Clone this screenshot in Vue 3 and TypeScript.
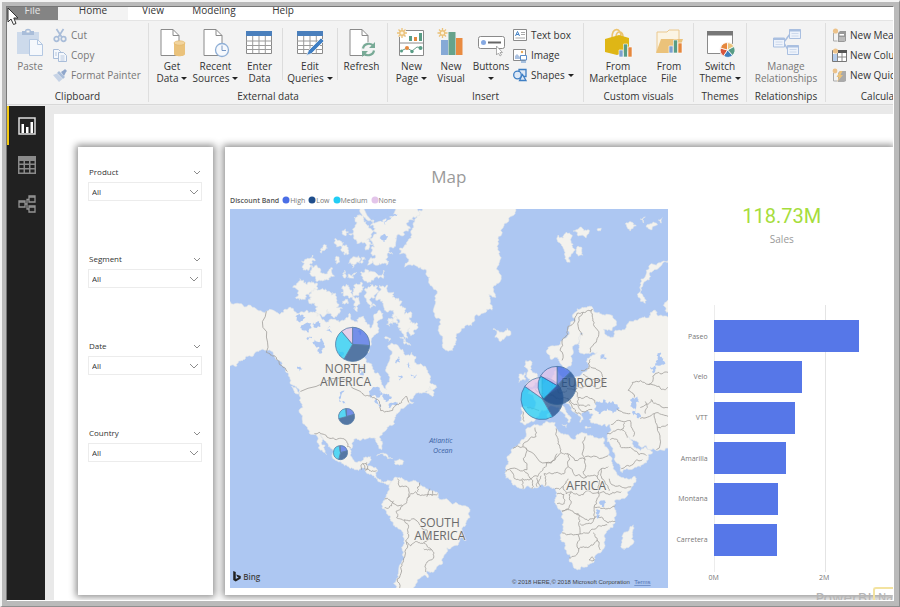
<script setup lang="ts">
import { ref } from 'vue'

type Point = [number, number]

interface RibbonItem {
  icon?: string
  lines?: string[]
  arrow?: boolean
  muted?: boolean
  divider?: boolean
}
interface SmallItem {
  icon: string
  label: string
  arrow?: boolean
  muted?: boolean
}
interface RibbonGroup {
  id: string
  title: string
  large: RibbonItem[]
  small: SmallItem[]
}

const sheet = '<path d="M3 1.500h12l6 6v20H3z" fill="#fff" stroke="#8a8a8a"/><path d="M15 1.500v6h6" fill="none" stroke="#8a8a8a"/>'
const spark = (x: number, y: number, r: number) =>
  `<g stroke="#ebc27a" stroke-width="1.300" transform="translate(${x} ${y})"><path d="M0 ${-r}V${r}M${-r} 0H${r}M${-r * 0.7} ${-r * 0.7}L${r * 0.7} ${r * 0.7}M${-r * 0.7} ${r * 0.7}L${r * 0.7} ${-r * 0.7}"/><circle r="${r * 0.45}" fill="#fbf3df"/></g>`
const miniBars = (x: number, y: number) =>
  `<g transform="translate(${x} ${y})" stroke="#fff" stroke-width=".6"><path d="M0 6h4v7H0z" fill="#7da0cf"/><path d="M4.500 0h4v13h-4z" fill="#589c85"/><path d="M9 3h4v10H9z" fill="#e5873d"/></g>`
const node = (x: number, y: number) =>
  `<path d="M${x} ${y}h11v9h-11z" fill="#eef3fb" stroke="#a9bfe0"/><path d="M${x} ${y + 1}h11" stroke="#a9bfe0" stroke-width="2"/><path d="M${x + 2} ${y + 4}h7M${x + 2} ${y + 6.5}h7" stroke="#c5d3ea" stroke-width=".8"/>`

const icons: Record<string, string> = {
  paste: '<path d="M1 4h22v22H1z" fill="#cddaeb"/><path d="M6 3h3c0-3 6-3 6 0h3v4H6z" fill="#a9bdd9"/><path d="M10.500 2.500h3v2h-3z" fill="#f3f3f3"/><path d="M13.500 11.500h8l5 5v11h-13z" fill="#f5f8fc" stroke="#b4c8e2"/><path d="M21.500 11.500v5h5" fill="none" stroke="#b4c8e2"/>',
  getData: sheet + '<path d="M16 15v11c0 3 11 3 11 0V15" fill="#eac27b"/><ellipse cx="21.500" cy="15" rx="5.500" ry="2.200" fill="#f1d49e" stroke="#e2b462" stroke-width=".6"/>',
  recent: sheet + '<circle cx="21" cy="22" r="6.500" fill="#f6f9fd" stroke="#8fafd6" stroke-width="1.300"/><path d="M21 17.500V22.500h4" fill="none" stroke="#7898c4"/>',
  enter: '<path d="M1.500 3.500h25v22h-25z" fill="#fff" stroke="#8a8a8a"/><path d="M1 3h26v5H1z" fill="#4a7fbc"/><path d="M1 13h26M1 17.500h26M1 21.500h26M7.700 8v17M14 8v17M20.300 8v17" stroke="#9b9b9b"/>',
  edit: '<path d="M1.500 3.500h25v22h-25z" fill="#fff" stroke="#8a8a8a"/><path d="M1 3h26v5H1z" fill="#4a7fbc"/><path d="M1 13h26M1 17.500h26M1 21.500h26M7.700 8v17M14 8v17M20.300 8v17" stroke="#9b9b9b"/><path d="M25 10l3 3-12.500 12.500-5 2 2-5z" fill="#3f7fc4" stroke="#f3f3f3" stroke-width=".8"/>',
  refresh: sheet + '<circle cx="21.500" cy="21.500" r="7.500" fill="#f3f3f3"/><path d="M16 20.500c1-5.500 8-6 10.500-2.500M27 22.500c-1 5.500-8 6-10.500 2.500" fill="none" stroke="#78aa96" stroke-width="2.200"/><path d="M28 14v6h-6zM15 29v-6h6z" fill="#78aa96"/>',
  newPage: '<path d="M2.500 2.500h24v25h-24z" fill="#fff" stroke="#8a8a8a"/><path d="M2 15h25" stroke="#8a8a8a"/><path d="M12 8h3v5h-3zM22 5h3v8h-3z" fill="#589c85"/><path d="M17 9h3v4h-3z" fill="#e5873d"/><path d="M4 23l6-3 5 3 5-4 5 1" fill="none" stroke="#6a9d8b"/><g fill="#589c85"><circle cx="4.500" cy="23" r="1.500"/><circle cx="15" cy="23.500" r="1.700"/><circle cx="23.500" cy="20" r="2"/></g><circle cx="10" cy="20" r="2" fill="#e5873d"/><path d="M0 0h9v9H0z" fill="#f3f3f3"/>' + spark(5, 5, 5),
  newVisual: '<path d="M4 12h7v15H4z" fill="#86a9d6"/><path d="M11.500 4h7v23h-7z" fill="#66a38c"/><path d="M19 10h6.500v17H19z" fill="#e98b41"/>' + spark(5.5, 5, 5),
  buttons: '<rect x="1.500" y="8.500" width="26" height="12" rx="2" fill="#fff" stroke="#8a8a8a"/><circle cx="6.500" cy="14.500" r="2.500" fill="#86a9e2"/><path d="M11 14.500h13" stroke="#666" stroke-width="2"/><path d="M19.500 18v9l2-2 1.500 3 1.500-1-1.500-2.500h2.500z" fill="#fff" stroke="#999" stroke-width=".8"/>',
  market: '<path d="M8 10c0-11 9-11 9-1M12 8c1-6 7-5 7 1" fill="none" stroke="#ecc46f" stroke-width="1.600"/><path d="M1 11l14-4 10 3v13l-12 4-12-3z" fill="#dfb615"/>' + miniBars(15, 16),
  folder: '<path d="M2 9V4h10l2-2h10v22H2z" fill="#fbf4e4" stroke="#ebc88e"/><path d="M1 25l5-14h22l-5 14z" fill="#ebc27a"/>' + miniBars(14, 12),
  theme: '<path d="M1.500 3.500h25v22h-25z" fill="#fff" stroke="#8a8a8a"/><path d="M1 3h26v4.500H1z" fill="#777"/><circle cx="21.500" cy="22" r="8" fill="#f3f3f3"/><g stroke="#fff" stroke-width=".8"><path d="M21.500 22v-7.500a7.500 7.500 0 0 1 6.500 4z" fill="#eac27b"/><path d="M21.500 22l6.500-3.500a7.500 7.500 0 0 1-1.500 9z" fill="#589c85"/><path d="M21.500 22l5 5.500a7.500 7.500 0 0 1-9 .5z" fill="#3f7fbd"/><path d="M21.500 22l-4 6a7.500 7.500 0 0 1-3-8z" fill="#d9553c"/><path d="M21.500 22l-7-2a7.500 7.500 0 0 1 7-5.500z" fill="#e5873d"/></g>',
  relations: '<path d="M12 14l6-8M12 15l4 7" stroke="#a9bfe0" stroke-width="1.500"/>' + node(1.5, 10) + node(17.5, 1.5) + node(15.500, 17.500),
  cut: '<g fill="none" stroke="#a9bdd9" stroke-width="1.700"><circle cx="3.500" cy="11" r="2.300"/><circle cx="10.500" cy="11" r="2.300"/><path d="M5 9.500L10.500 1M9 9.500L3.500 1"/></g>',
  copy: '<g fill="#f5f8fc" stroke="#a9bdd9"><path d="M.500 1.500h5l2 2v7h-7z"/><path d="M5.500 4.500h5l3 3v6h-8z"/></g><path d="M2 5h2M2 7h2M7.500 8h4M7.500 10h4M7.500 12h4" stroke="#a9bdd9" stroke-width=".8"/>',
  painter: '<path d="M8 4l3-2 1-1 2 2-1 1-2 4z" fill="#8fa6cb"/><path d="M6 3l6 6-2 2-6-6z" fill="#a9bdd9"/><path d="M4 5.500l5.500 5.500L6 14 0 7z" fill="#c6d3e6"/>',
  textBox: '<path d="M.500 1.500h13v11H.500z" fill="#fff" stroke="#8a8a8a"/><path d="M2.500 8l2-4.500L6.500 8M3.200 6.500h2.600" fill="none" stroke="#3f7fc4"/><path d="M8 4.500h4M8 6.500h4M2.500 10h9.500" stroke="#aaa"/>',
  image: '<path d="M.500 1.500h12v11H.500z" fill="#fff" stroke="#8a8a8a"/><circle cx="9" cy="4" r="1.200" fill="#e9a95a"/><path d="M2 8l2-2 3 3v2H2z" fill="#a9c0e0"/><path d="M7.500 7.500h6v4.500h-6z" fill="#fff" stroke="#5c8fcb"/><path d="M8 14h5" stroke="#5c8fcb"/>',
  shapes: '<g fill="#dde8f6" stroke="#3f7fc4" stroke-width="1.300"><path d="M6 1.500h7v7H6z"/><circle cx="4.500" cy="7" r="3.800"/><path d="M9.500 6.500l3.500 6H6.500z"/></g>',
  measure: '<path d="M1.500 5v8h4" fill="none" stroke="#aaa"/><path d="M6 5l2-2h6v10l-2 1H6z" fill="#999"/><path d="M7.500 6h4.500v1.500H7.500z" fill="#fff"/><path d="M8 9v4M10 9v4M12 9v4" stroke="#eee" stroke-width=".8"/><circle cx="3.500" cy="3" r="2.600" fill="#ecc28a"/>',
  column: '<path d="M.500 2.500h14v11H.500z" fill="#fff" stroke="#777"/><path d="M6 2h9v3H6z" fill="#555"/><path d="M1 6h4v7H1z" fill="#b5cdec"/><path d="M5.500 5v8M10 5v8M5 9h9" stroke="#888"/><circle cx="3.500" cy="3" r="2.600" fill="#ecc28a"/>',
  quick: '<path d="M1.500 5v8h4" fill="none" stroke="#aaa"/><path d="M6 5l2-2h6v10l-2 1H6z" fill="#aaa"/><path d="M8 3L4.500 9H7l-2 5 6-7H8.500l2-4z" fill="#ebc27a"/><circle cx="3" cy="3" r="2.400" fill="#ecc28a"/>',
}

const tabs = ['File', 'Home', 'View', 'Modeling', 'Help']

const groups: RibbonGroup[] = [
  {
    id: 'clipboard',
    title: 'Clipboard',
    large: [{ icon: 'paste', lines: ['Paste'], muted: true }],
    small: [
      { icon: 'cut', label: 'Cut', muted: true },
      { icon: 'copy', label: 'Copy', muted: true },
      { icon: 'painter', label: 'Format Painter', muted: true },
    ],
  },
  {
    id: 'external',
    title: 'External data',
    large: [
      { icon: 'getData', lines: ['Get', 'Data'], arrow: true },
      { icon: 'recent', lines: ['Recent', 'Sources'], arrow: true },
      { icon: 'enter', lines: ['Enter', 'Data'] },
      { divider: true },
      { icon: 'edit', lines: ['Edit', 'Queries'], arrow: true },
      { divider: true },
      { icon: 'refresh', lines: ['Refresh'] },
    ],
    small: [],
  },
  {
    id: 'insert',
    title: 'Insert',
    large: [
      { icon: 'newPage', lines: ['New', 'Page'], arrow: true },
      { icon: 'newVisual', lines: ['New', 'Visual'] },
      { icon: 'buttons', lines: ['Buttons', ''], arrow: true },
    ],
    small: [
      { icon: 'textBox', label: 'Text box' },
      { icon: 'image', label: 'Image' },
      { icon: 'shapes', label: 'Shapes', arrow: true },
    ],
  },
  {
    id: 'custom',
    title: 'Custom visuals',
    large: [
      { icon: 'market', lines: ['From', 'Marketplace'] },
      { icon: 'folder', lines: ['From', 'File'] },
    ],
    small: [],
  },
  { id: 'themes', title: 'Themes', large: [{ icon: 'theme', lines: ['Switch', 'Theme'], arrow: true }], small: [] },
  {
    id: 'relationships',
    title: 'Relationships',
    large: [{ icon: 'relations', lines: ['Manage', 'Relationships'], muted: true }],
    small: [],
  },
  {
    id: 'calculations',
    title: 'Calculations',
    large: [],
    small: [
      { icon: 'measure', label: 'New Measure' },
      { icon: 'column', label: 'New Column' },
      { icon: 'quick', label: 'New Quick Measure' },
    ],
  },
]

const slicers = ref([
  { name: 'Product', value: 'All' },
  { name: 'Segment', value: 'All' },
  { name: 'Date', value: 'All' },
  { name: 'Country', value: 'All' },
])

const bands = [
  { name: 'High', color: '#4a6ee6' },
  { name: 'Low', color: '#1f4e8c' },
  { name: 'Medium', color: '#22cdf5' },
  { name: 'None', color: '#e3c5ea' },
]

const axisMax = 3
const products = [
  { name: 'Paseo', sales: 2.6 },
  { name: 'Velo', sales: 1.58 },
  { name: 'VTT', sales: 1.46 },
  { name: 'Amarilla', sales: 1.3 },
  { name: 'Montana', sales: 1.16 },
  { name: 'Carretera', sales: 1.13 },
]

/* Coastlines: coarse outlines get repeatable midpoint noise so that they read as shores. */
function parse(text: string): Point[] {
  return text.split(' ').map((pair) => pair.split(',').map(Number) as Point)
}
function noise(x: number, y: number): number {
  const s = Math.sin(x * 12.9898 + y * 78.233) * 43758.5453
  return (s - Math.floor(s)) * 2 - 1
}
function roughen(points: Point[], closed: boolean, amount: number, passes: number): Point[] {
  let current = points
  for (let pass = 0; pass < passes; pass++) {
    const next: Point[] = []
    const count = current.length
    for (let i = 0; i < count; i++) {
      const a = current[i]
      next.push(a)
      if (!closed && i === count - 1) break
      const b = current[(i + 1) % count]
      const length = Math.hypot(b[0] - a[0], b[1] - a[1])
      if (length < 1.6) continue
      const shift = noise(a[0] + b[0], a[1] + b[1]) * amount
      next.push([(a[0] + b[0]) / 2 - (b[1] - a[1]) * shift, (a[1] + b[1]) / 2 + (b[0] - a[0]) * shift])
    }
    current = next
  }
  return current
}
function trace(text: string, closed: boolean, amount: number): string {
  const points = roughen(parse(text), closed, amount, 3)
  return 'M' + points.map((p) => `${p[0].toFixed(1)} ${p[1].toFixed(1)}`).join('L') + (closed ? 'Z' : '')
}

const arctic = [
  // Ellesmere and Devon
  '363,206 424,206 417,216 409,222 405,231 397,237 396,243 391,247 393,254 386,259 387,265 378,265 368,265 369,261 376,257 372,252 375,247 371,240 377,234 371,226 374,220 366,218',
  '355,217 361,215 364,221 369,228 372,236 367,240 370,247 366,250 360,243 354,238 353,229 357,224',
  // Banks and Victoria
  '299,282 304,280 308,284 314,282 318,287 311,292 306,299 300,300 298,293',
  '312,297 318,290 326,289 332,295 336,293 337,301 343,308 340,313 333,316 328,309 322,315 316,312 318,306 312,304',
  // Baffin
  '366,288 371,284 378,286 376,294 372,302 376,306 371,308 367,300',
  '380,285 388,285 394,292 393,297 399,298 400,305 406,309 405,314 412,316 413,323 418,326 414,334 410,328 408,338 402,332 398,326 399,319 392,316 391,310 384,306 378,300 379,292',
  '303,266 307,259 313,255 316,260 310,264 306,270', '312,270 317,265 321,271 328,272 333,269 335,276 327,279 320,280 315,276', '321,249 327,245 328,248 322,253',
  '335,239 341,241 343,246 348,247 349,254 343,252 340,246 336,244', '336,257 340,262 337,264', '346,229 349,232 346,236', '349,263 356,257 360,263 353,268', '350,274 357,272 354,278 348,277',
  '361,272 366,269 369,272 384,270 384,278 374,280 363,278', '342,288 347,284 352,290 350,298 345,296', '356,284 363,283 363,290 357,295 354,290', '346,299 349,303 345,304',
  '353,299 357,297 360,302 358,311 354,308', '345,270 347,276 344,277', '362,257 366,259 362,263', '388,320 395,317 398,322 393,324', '400,337 406,338 411,345 404,343', '389,318 390,326 387,324', '385,337 391,339 389,341',
].map((shape) => trace(shape, true, 0.5))

const land = [
  // North and Central America
  '226,306 238,303 253,307 267,311 280,314 286,309 293,308 300,313 307,310 313,312 320,314 325,320 333,319 340,322 346,319 350,313 353,320 358,322 364,316 367,322 371,328 374,316 380,310 383,318 378,325 379,332 373,337 369,347 365,355 367,362 373,368 379,373 382,382 387,389 390,381 389,374 386,369 389,362 388,346 396,344 403,349 406,355 412,352 415,362 424,366 428,372 430,382 437,387 432,391 424,392 416,393 410,399 414,402 407,405 402,408 398,413 395,419 392,425 385,431 380,436 383,443 382,449 379,445 376,438 370,437 364,438 357,438 353,442 350,448 352,456 355,461 361,461 364,457 371,456 370,461 367,464 373,466 378,470 378,478 383,482 390,480 392,484 387,484 379,481 374,475 368,473 361,468 352,467 345,465 337,460 333,453 329,446 324,439 320,434 322,442 325,449 327,454 323,450 319,443 315,434 308,427 303,420 300,412 301,401 300,392 296,386 291,381 289,373 284,366 279,360 275,355 267,350 261,350 255,353 247,356 242,360 237,366 226,370',
  // Greenland
  '424,206 519,206 515,212 509,220 503,228 499,240 500,252 499,263 500,274 496,285 496,297 489,294 490,303 492,310 483,313 475,320 466,325 458,333 456,342 453,350 447,350 443,342 439,328 435,313 435,300 433,287 430,277 425,269 417,266 405,267 409,261 400,254 400,248 407,242 411,232 415,222',
  // Newfoundland, Vancouver, Cuba, Hispaniola
  '425,392 430,386 434,391 433,396', '292,386 297,388 300,393 295,391', '377,455 385,453 393,458 388,458', '395,460 404,461 402,464 395,463',
  // South America
  '390,483 394,478 399,477 405,480 415,480 421,485 427,488 434,490 438,492 442,499 449,500 458,503 464,505 470,510 470,517 466,522 462,528 461,534 460,539 454,545 447,547 444,555 438,565 434,571 427,570 428,577 419,578 416,583 414,590 397,590 399,576 402,562 404,551 405,542 404,534 398,527 391,520 387,513 383,508 382,504 385,498 388,491',
  // Africa
  '533,425 543,423 555,422 556,428 560,432 568,434 576,438 580,433 588,435 596,437 603,437 603,443 608,454 612,463 615,470 620,476 627,478 635,476 633,483 627,492 618,499 614,505 616,512 615,522 608,529 605,537 604,543 600,552 594,561 587,566 577,569 573,565 571,556 566,549 564,541 560,534 562,524 562,512 557,505 555,500 557,492 552,488 543,484 533,488 523,488 516,485 510,479 505,473 506,465 507,456 513,448 521,440 526,432',
  '633,524 632,534 629,546 624,549 621,543 623,533 629,529',
  // Eurasia with Scandinavia, Iberia, Italy, Turkey and Arabia
  '674,316 661,315 655,310 649,317 640,318 629,321 625,329 618,330 613,337 607,336 603,329 612,330 616,323 607,314 599,312 590,306 582,307 574,313 569,326 563,338 550,346 547,353 551,359 559,359 562,365 566,370 571,365 571,355 575,344 580,333 583,333 579,342 579,350 587,353 597,352 590,356 586,361 587,369 580,375 571,377 562,377 559,373 556,368 553,375 551,380 544,383 538,388 532,389 528,393 534,398 535,407 526,406 521,407 521,416 520,421 526,424 534,421 539,413 547,409 554,406 559,410 565,416 568,422 571,418 566,410 562,404 565,402 571,409 577,413 580,422 583,419 581,413 588,410 593,414 589,419 595,423 603,424 610,424 611,430 607,437 610,444 615,455 620,466 622,472 633,468 642,464 648,458 652,451 646,447 640,450 635,447 631,440 627,436 634,440 640,446 650,449 660,449 674,452',
  // British Isles, Iceland
  '526,360 530,360 531,367 535,373 539,381 534,385 526,386 530,379 527,372 524,366', '519,374 525,372 525,380 519,382', '493,329 500,332 507,328 511,333 504,339 495,337 497,333',
  // Svalbard, Novaya Zemlya, Franz Josef Land
  '558,235 563,238 566,232 572,235 573,244 575,250 571,254 570,262 565,256 563,248 558,242', '573,231 580,227 589,230 586,238 578,236', '578,246 582,248 583,255 578,256',
  '674,259 668,262 658,268 649,273 643,283 640,293 645,303 640,301 637,294 640,283 646,270 656,265 668,260', '625,224 631,222 636,226 630,231', '640,219 645,217 643,223', '646,227 653,222 657,225 651,230', '658,220 662,218 661,223', '597,229 601,228 600,231',
  '663,305 668,300 672,302 672,312 666,312', '562,424 567,424 566,427', '548,413 550,412 550,418 548,418', '585,426 591,427 586,428',
].map((shape) => trace(shape, true, 0.3)).concat(arctic)

const water = [
  '594,408 597,401 603,399 607,403 613,401 619,407 616,411 604,410 597,411',
  '630,399 637,396 639,402 636,406 640,414 638,418 633,415 632,407',
  '370,393 380,390 384,393 376,395', '377,396 381,395 381,407 377,403', '384,393 391,396 389,400 384,398', '389,405 398,402 397,405 389,407',
  '600,500 605,500 604,506 600,504', '596,509 598,509 599,517 596,513', '343,392 345,390 346,403 344,403', '302,325 312,327 309,333 303,330', '313,342 322,338 325,345 316,346', '296,316 306,317 301,322',
  '339,348 341,356 337,352', '600,355 606,353 605,359 600,358', '650,366 656,360 660,352 663,358 657,365 652,372',
  '298,366 303,368 300,371', '314,322 321,323 318,327', '326,330 331,327 332,333', '318,350 324,349 322,353', '308,337 312,338 309,341', '358,331 363,329 361,335', '406,364 410,362 411,368', '411,374 417,374 414,378', '399,375 403,376 400,380', '396,360 399,356 400,362', '362,368 365,366 364,375', '375,218 384,222 392,217 386,225', '380,238 388,236 384,242', '388,210 398,214 391,216',
].map((shape) => trace(shape, true, 0.5))

const borders = [
  '267,311 267,352 276,356 283,366 288,371', '301,391 361,391 368,395 378,399 381,410 395,406 402,402 407,396 409,402',
  '315,433 325,434 337,439 343,438 348,446 351,447', '362,469 363,463 370,470 377,470', '363,463 367,462 366,470',
  '398,478 400,486 409,488 408,497 403,505 394,503 385,498', '385,507 392,505 394,500', '408,497 416,491 427,494 438,493', '420,482 418,491', '430,488 427,496', '433,490 432,495',
  '403,505 397,510 397,517 405,519 413,518 420,524 427,529 430,538 424,542 432,549 434,556', '405,519 408,530 406,540 411,545 418,541 424,542', '407,541 405,556 402,570 400,587', '434,556 427,562 426,571', '424,548 432,549',
  '535,427 536,436 523,446 526,448 546,462 557,453', '513,448 523,446', '526,447 527,469 510,468 506,471', '556,428 558,440 561,452 567,453 585,459 585,436', '585,456 608,455', '561,452 546,462 542,470 531,478 524,470', '567,453 568,466 564,473 553,473 544,473', '568,466 574,474 585,477 597,476 601,468 608,466', '585,459 583,471 586,477',
  '510,469 514,477 522,479 523,488', '522,478 531,478 532,488', '537,477 537,486', '541,475 541,486', '544,473 545,485', '555,488 563,486 568,478', '563,486 566,493 571,491 577,493 588,490', '557,493 564,494 564,503 557,503', '571,491 570,504 562,510', '562,511 576,513 580,520 580,533 562,532', '580,523 592,522 595,517 594,506 598,492 588,490', '576,513 588,520 596,515', '597,476 598,492 609,494 617,491 621,491', '609,478 621,486 631,486', '601,468 604,480 609,490', '594,506 607,508 615,505', '598,516 608,522 615,521', '580,533 589,532 598,525 607,524', '578,534 577,553 569,557', '578,548 589,546 597,539 593,532', '597,539 600,549', '592,556 594,559 589,559 592,556',
  '562,360 562,340 568,326 577,313 583,312 582,335', '583,312 592,309 594,322 597,338 590,352', '590,359 589,368 581,370', '590,366 600,371 604,380 598,388 583,387 574,390', '575,378 575,389 567,388', '551,381 549,392 556,398 568,398 577,404', '535,389 545,396 556,398', '574,390 578,397 592,398 595,403', '577,404 583,411 592,409', '568,398 573,408 581,414', '523,411 524,421', '527,407 539,410', '556,381 558,392 567,390', '578,397 579,405 590,405', '561,380 560,390', '583,374 592,379 604,380',
  '611,424 623,421 630,420 633,436', '624,422 621,429 627,437', '607,433 617,429 621,429', '610,439 617,439 620,446 633,449 646,455', '621,468 634,462 642,459', '617,408 630,413', '640,418 654,413 668,416', '654,413 657,427 656,449', '657,427 668,424', '634,397 628,390 632,382 648,384 655,373 668,372', '640,407 651,399 660,405 668,407', '645,413 645,401', '648,384 661,389 668,387',
].map((line) => trace(line, false, 0.22))

interface Pie {
  x: number
  y: number
  r: number
  stops: number[]
}
const pies: Pie[] = [
  { x: 353, y: 344, r: 17, stops: [0, 94, 210, 320, 360] },
  { x: 347, y: 416, r: 8, stops: [0, 75, 255, 355, 360] },
  { x: 341, y: 452, r: 7, stops: [0, 75, 195, 350, 360] },
  { x: 542, y: 398, r: 21, stops: [0, 60, 150, 305, 360] },
  { x: 557, y: 385, r: 19, stops: [0, 45, 225, 300, 360] },
]
function wedge(pie: Pie, index: number): string {
  const at = (deg: number) => {
    const rad = ((deg - 90) * Math.PI) / 180
    return `${(pie.x + pie.r * Math.cos(rad)).toFixed(2)} ${(pie.y + pie.r * Math.sin(rad)).toFixed(2)}`
  }
  const from = pie.stops[index]
  const to = pie.stops[index + 1]
  return `M${pie.x} ${pie.y}L${at(from)}A${pie.r} ${pie.r} 0 ${to - from > 180 ? 1 : 0} 1 ${at(to)}Z`
}
</script>

<template>
  <div class="frame">
    <div class="window">
      <nav class="tabs" aria-label="Ribbon tabs">
        <button v-for="tab in tabs" :key="tab" type="button" class="tab" :class="'tab-' + tab.toLowerCase()">
          {{ tab }}
        </button>
      </nav>

      <div class="ribbon">
        <section v-for="group in groups" :key="group.id" class="group" :class="'group-' + group.id">
          <div class="tools">
            <template v-for="(item, i) in group.large" :key="i">
              <span v-if="item.divider" class="divider"></span>
              <button v-else type="button" class="large" :class="{ muted: item.muted }">
                <svg class="icon-large" viewBox="0 0 29 30" aria-hidden="true" v-html="icons[item.icon ?? '']"></svg>
                <span v-for="(line, n) in item.lines" :key="n" class="line">
                  {{ line }}<i v-if="item.arrow && n === 1" class="arrow" :class="{ alone: !line }"></i>
                </span>
              </button>
            </template>
            <div v-if="group.small.length" class="small-list">
              <button v-for="item in group.small" :key="item.label" type="button" class="small" :class="{ muted: item.muted }">
                <svg class="icon-small" viewBox="0 0 15 15" aria-hidden="true" v-html="icons[item.icon]"></svg>
                <span>{{ item.label }}<i v-if="item.arrow" class="arrow"></i></span>
              </button>
            </div>
          </div>
          <h2 class="group-title">{{ group.title }}</h2>
        </section>
      </div>

      <div class="workspace">
        <aside class="rail">
          <button type="button" class="view active" aria-label="Report view">
            <svg viewBox="0 0 18 18"><path d="M1 1h16v16H1z" fill="none" stroke="#ddd" stroke-width="1.500" /><path d="M3.500 7H6v9H3.500zM8 10h2.500v6H8zM12.500 5H15v11h-2.500z" fill="#fff" /></svg>
          </button>
          <button type="button" class="view" aria-label="Data view">
            <svg viewBox="0 0 18 18"><path d="M0 0h18v18H0z" fill="#8a8a8a" /><path d="M1.500 5h4v2.500h-4zM7 5h4v2.500H7zM12.500 5h4v2.500h-4zM1.500 9h4v3h-4zM7 9h4v3H7zM12.500 9h4v3h-4zM1.500 13.500h4v3h-4zM7 13.500h4v3H7zM12.500 13.500h4v3h-4z" fill="#212121" /></svg>
          </button>
          <button type="button" class="view" aria-label="Relationship view">
            <svg viewBox="0 0 18 18"><g fill="none" stroke="#949494" stroke-width="1.300"><path d="M1 6h6v6H1zM11 1h6v6h-6zM11 11h6v6h-6zM7 9h2V4.500h2M9 9v5h2" /><path d="M1 7h6M11 2h6M11 12h6" /></g></svg>
          </button>
        </aside>

        <main class="canvas">
          <div class="page">
            <section class="card filters">
              <div v-for="slicer in slicers" :key="slicer.name" class="slicer">
                <div class="slicer-head">
                  <label :for="'slicer-' + slicer.name">{{ slicer.name }}</label>
                  <svg class="chevron-thin" viewBox="0 0 8 5" aria-hidden="true"><path d="M1 1l3 3 3-3" /></svg>
                </div>
                <div class="select-box">
                  <select :id="'slicer-' + slicer.name" v-model="slicer.value">
                    <option>All</option>
                  </select>
                  <svg class="chevron" viewBox="0 0 10 6" aria-hidden="true"><path d="M1 1l4 4 4-4" /></svg>
                </div>
              </div>
            </section>

            <section class="card report">
              <div class="map-panel">
                <h1 class="map-title">Map</h1>
                <div class="legend">
                  <strong>Discount Band</strong>
                  <span v-for="band in bands" :key="band.name" class="band">
                    <svg viewBox="0 0 8 8" aria-hidden="true"><circle cx="4" cy="4" r="3.500" :fill="band.color" /></svg>{{ band.name }}
                  </span>
                </div>
                <svg class="map" viewBox="230 209 438 378" preserveAspectRatio="xMidYMid slice" role="img" aria-label="Sales by country and discount band">
                  <rect x="0" y="0" width="1200" height="900" fill="#adc7f2" />
                  <path v-for="(shape, i) in land" :key="'l' + i" :d="shape" class="land" />
                  <path v-for="(shape, i) in water" :key="'w' + i" :d="shape" class="water" />
                  <path v-for="(line, i) in borders" :key="'b' + i" :d="line" class="border" />
                  <g class="continent">
                    <text x="346" y="373">NORTH</text>
                    <text x="346" y="386">AMERICA</text>
                    <text x="584" y="387">EUROPE</text>
                    <text x="586" y="489">AFRICA</text>
                    <text x="440" y="526">SOUTH</text>
                    <text x="440" y="539">AMERICA</text>
                  </g>
                  <g class="ocean">
                    <text x="441" y="442">Atlantic</text>
                    <text x="443" y="452">Ocean</text>
                  </g>
                  <g v-for="(pie, p) in pies" :key="'p' + p" class="pie">
                    <path v-for="(band, b) in bands" :key="band.name" :d="wedge(pie, b)" :fill="band.color" />
                  </g>
                  <path d="M234 570l2.500 1v7l3-1.500-1.500-.8-1-2.200 4.500 1.600v2.500l-5 3-2.500-1.500z" fill="#222" />
                  <text x="244" y="579" class="bing">Bing</text>
                  <text x="512" y="583" class="credit">© 2018 HERE,© 2018 Microsoft Corporation</text>
                  <a href="#terms"><text x="634" y="583" class="credit terms">Terms</text></a>
                </svg>
              </div>

              <div class="side-panel">
                <div class="kpi">
                  <p class="kpi-value">118.73M</p>
                  <p class="kpi-label">Sales</p>
                </div>
                <div class="chart">
                  <div class="names">
                    <span v-for="product in products" :key="product.name">{{ product.name }}</span>
                  </div>
                  <div class="plot">
                    <div v-for="product in products" :key="product.name" class="slot">
                      <div class="bar" :style="{ width: (product.sales / axisMax) * 100 + '%' }"></div>
                    </div>
                  </div>
                  <div class="axis"><span>0M</span><span>2M</span></div>
                </div>
              </div>
            </section>
          </div>
        </main>
      </div>

      <div class="watermark" aria-hidden="true"><span>PowerBI</span><b>.Na</b></div>
    </div>
    <svg class="cursor" viewBox="0 0 12 19" aria-hidden="true"><path d="M1 1v14l3-3 2.500 5.500 2.500-1L6.800 11H11z" fill="#fff" stroke="#333" /></svg>
  </div>
</template>

<style>
body {
  background: #fff;
}
</style>

<style scoped>
.frame {
  position: relative;
  display: flex;
  box-sizing: border-box;
  min-height: 100vh;
  border: 2px solid #f4f4f4;
  border-right: 1px solid #8f8f8f;
  border-bottom: 1px solid #8f8f8f;
  background: #bababa;
  padding: 4px 5px 5px 4px;
  font-family: 'Open Sans', 'Noto Sans', sans-serif;
  color: #333;
}
.window {
  position: relative;
  display: flex;
  flex: 1;
  flex-direction: column;
  min-width: 0;
  overflow: hidden;
  border: 1px solid #777;
  border-right-color: #fff;
  border-bottom-color: #fff;
  background: #fff;
}
button {
  margin: 0;
  padding: 0;
  border: 0;
  background: none;
  font: inherit;
  color: inherit;
}
h1,
h2,
p {
  margin: 0;
  font-weight: 400;
}

.tabs {
  display: flex;
  align-items: flex-end;
  height: 13px;
  overflow: hidden;
}
.tab {
  height: 20px;
  padding-bottom: 1px;
  font-size: 10px;
  line-height: 14px;
}
.tab-file {
  width: 51px;
  background: #848484;
  color: #e6e6e6;
}
.tab-home {
  width: 70px;
  background: #f3f3f3;
}
.tab-view {
  width: 50px;
}
.tab-modeling {
  width: 72px;
}
.tab-help {
  width: 66px;
}

.ribbon {
  display: flex;
  height: 85px;
  overflow: hidden;
  border-top: 1px solid #e4e4e4;
  border-bottom: 1px solid #d8d8d8;
  box-sizing: border-box;
  background: #f3f3f3;
}
.group {
  box-sizing: border-box;
  flex: none;
  margin: 2px 0;
  border-right: 1px solid #dedede;
}
.group:last-child {
  border-right: 0;
}
.tools {
  display: grid;
  height: 61px;
  padding-top: 5px;
}
.group-clipboard {
  width: 142px;
}
.group-clipboard .tools {
  grid-template-columns: 46px 1fr;
}
.group-external {
  width: 239px;
}
.group-external .tools {
  padding-left: 1px;
  grid-template-columns: 44px 43px 45px 1px 54px 1px 47px;
}
.group-insert {
  width: 196px;
}
.group-insert .tools {
  padding-left: 2px;
  grid-template-columns: 43px 36px 44px 1fr;
}
.group-custom {
  width: 110px;
}
.group-custom .tools {
  padding-left: 1px;
  grid-template-columns: 66px 36px;
}
.group-themes {
  width: 53px;
}
.group-relationships {
  width: 79px;
}
.group-calculations {
  width: 120px;
  padding-left: 6px;
}
.large {
  display: flex;
  flex-direction: column;
  align-items: center;
  font-size: 10px;
  white-space: nowrap;
}
.icon-large {
  width: 29px;
  height: 30px;
  margin-bottom: 2px;
}
.line {
  min-height: 12px;
  line-height: 12px;
}
.arrow {
  display: inline-block;
  margin-left: 3px;
  border: 3px solid transparent;
  border-top-color: #222;
  border-bottom: 0;
  vertical-align: 2px;
}
.alone {
  margin-left: 0;
}
.divider {
  height: 52px;
  background: #dcdcdc;
}
.muted {
  color: #777;
}
.small-list {
  display: flex;
  flex-direction: column;
  margin-top: -3px;
}
.small {
  display: flex;
  align-items: center;
  gap: 3px;
  height: 20px;
  font-size: 10px;
  white-space: nowrap;
}
.icon-small {
  width: 15px;
  height: 15px;
}
.group-title {
  font-size: 10px;
  line-height: 14px;
  text-align: center;
}

.workspace {
  display: flex;
  flex: 1;
  border-top: 1px solid #ececec;
}
.rail {
  flex: none;
  width: 38px;
  background: #212121;
}
.view {
  display: grid;
  place-items: center;
  width: 38px;
  height: 39px;
  box-sizing: border-box;
  border-left: 2px solid transparent;
}
.view svg {
  width: 18px;
  height: 18px;
}
.active {
  border-left-color: #f2c811;
}
.canvas {
  display: flex;
  flex: 1;
  min-width: 0;
  padding: 8px 0 0 9px;
  background: #e9e9e9;
}
.page {
  display: flex;
  flex: 1;
  gap: 12px;
  min-width: 0;
  padding: 33px 0 5px 24px;
  background: #fff;
}
.card {
  box-sizing: border-box;
  background: #fff;
  box-shadow: 0 0 7px 2px rgba(0, 0, 0, 0.45);
}
.filters {
  display: flex;
  flex: none;
  flex-direction: column;
  gap: 52px;
  width: 135px;
  padding: 19px 11px 0 10px;
}
.slicer-head {
  display: flex;
  align-items: center;
  justify-content: space-between;
  height: 12px;
  margin-bottom: 4px;
  padding: 0 1px;
  font-size: 8px;
  line-height: 10px;
}
.chevron-thin {
  width: 8px;
  height: 5px;
}
.chevron-thin path,
.chevron path {
  fill: none;
  stroke: #8c8c8c;
}
.select-box {
  display: grid;
  align-items: center;
}
.select-box > * {
  grid-area: 1 / 1;
}
select {
  appearance: none;
  width: 100%;
  height: 19px;
  padding: 0 3px;
  border: 1px solid #ececec;
  border-radius: 0;
  background: #fff;
  font: inherit;
  font-size: 8px;
  color: #333;
}
.chevron {
  justify-self: end;
  width: 10px;
  height: 6px;
  margin-right: 3px;
  pointer-events: none;
}

.report {
  display: grid;
  grid-template-columns: minmax(0, 1fr) 34%;
  flex: 1;
  min-width: 0;
  padding: 0 0 7px 5px;
}
.map-panel {
  display: flex;
  flex-direction: column;
  min-width: 0;
}
.map-title {
  padding-top: 18px;
  font-size: 17px;
  line-height: 24px;
  text-align: center;
  color: #9a9a9a;
}
.legend {
  display: flex;
  align-items: center;
  gap: 3px;
  height: 10px;
  margin: 6px 0 4px;
  font-size: 7px;
  color: #777;
}
.legend strong {
  font-weight: 600;
  color: #555;
}
.band {
  display: flex;
  align-items: center;
}
.band svg {
  width: 8px;
  height: 8px;
}
.map {
  display: block;
  flex: 1 1 0;
  width: 100%;
  min-height: 0;
}
.land {
  fill: #f3f2ee;
  stroke: #e3e6e8;
  stroke-width: 0.6;
}
.water {
  fill: #adc7f2;
}
.border {
  fill: none;
  stroke: #a09d9a;
  stroke-width: 0.8;
}
.continent text {
  font-size: 12px;
  text-anchor: middle;
  fill: #6b6b6b;
  paint-order: stroke;
  stroke: #f3f2ee;
  stroke-width: 1px;
}
.ocean text {
  font-size: 7px;
  font-style: italic;
  text-anchor: middle;
  fill: #3b62a3;
}
.pie {
  opacity: 0.75;
}
.pie path {
  stroke: #24578f;
  stroke-width: 0.8;
}
.bing {
  font-size: 8px;
  font-weight: 600;
  fill: #444;
}
.credit {
  font-family: 'Liberation Sans', sans-serif;
  font-size: 6px;
  fill: #444;
}
.terms {
  fill: #4d6fb0;
  text-decoration: underline;
}

.side-panel {
  display: flex;
  flex-direction: column;
  justify-content: space-between;
  padding-top: 57px;
}
.kpi {
  padding-left: 3px;
  text-align: center;
}
.kpi-value {
  font-family: Roboto, sans-serif;
  font-size: 20px;
  line-height: 24px;
  color: #a6dd3c;
}
.kpi-label {
  margin-top: 4px;
  font-size: 10px;
  line-height: 14px;
  color: #999;
}
.chart {
  display: grid;
  grid-template-columns: 36px 1fr;
  grid-template-rows: 267px auto;
  column-gap: 6px;
  padding: 0 12px 4px 4px;
  font-size: 7px;
  color: #777;
}
.names,
.plot {
  display: grid;
  grid-template-rows: repeat(6, 1fr);
  align-items: center;
  padding: 11px 0 12px;
}
.names {
  text-align: right;
}
.plot {
  background: linear-gradient(#ececec, #ececec) 0 0 / 1px 100% no-repeat, linear-gradient(#e4e4e4, #e4e4e4) 67% 0 / 1px 100% no-repeat;
}
.bar {
  height: 32px;
  background: #5677e8;
}
.axis {
  display: flex;
  grid-column: 2;
  gap: 100px;
  margin-left: -5px;
  line-height: 12px;
}
.watermark {
  position: absolute;
  right: 0;
  bottom: -7px;
  display: flex;
  height: 20px;
  font-family: 'DejaVu Sans', sans-serif;
  font-size: 14px;
  line-height: 22px;
  color: #b5b5b5;
}
.watermark b {
  margin-left: 1px;
  border-top: 2px solid #f3e3a0;
  border-left: 2px solid #f3e3a0;
  border-radius: 3px 0 0;
  font-size: 11px;
  font-weight: 400;
  line-height: 18px;
}
.cursor {
  position: absolute;
  top: 5px;
  left: 5px;
  width: 12px;
  height: 19px;
}
</style>
